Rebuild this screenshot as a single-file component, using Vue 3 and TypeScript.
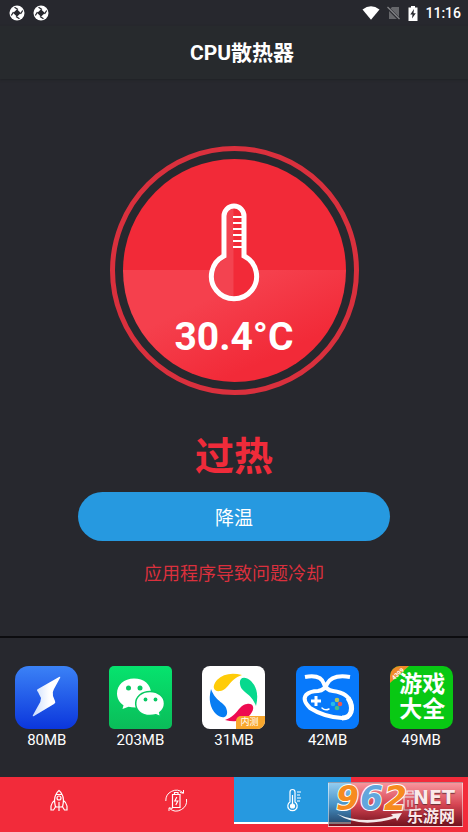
<script setup lang="ts">
import { ref } from 'vue'

interface AppItem {
  id: string
  name: string
  size: string
}

const apps: AppItem[] = [
  { id: 'bolt', name: '加速', size: '80MB' },
  { id: 'wechat', name: '微信', size: '203MB' },
  { id: 'swirl', name: '应用宝', size: '31MB' },
  { id: 'game', name: '游戏', size: '42MB' },
  { id: 'box', name: '游戏大全', size: '49MB' },
]

const tabs = [
  { id: 'boost', label: '加速' },
  { id: 'battery', label: '省电' },
  { id: 'cool', label: '降温' },
  { id: 'junk', label: '清理' },
]
const active = ref('cool')
const ticks = [217, 223, 229, 235, 241, 247]
const petals = ['#ffcc08', '#07d98e', '#ee0b50', '#087df2']
</script>

<template>
  <div class="screen">
    <div class="status">
      <div class="status-group left">
        <svg v-for="n in 2" :key="n" class="spinner" viewBox="0 0 16 16">
          <circle cx="8" cy="8" r="7.500" fill="#fff" />
          <path d="M8 4.200 11.800 8 8 11.800 4.200 8Z" fill="#27282e" />
          <path d="M9 4.500 5.500 2.300M11.500 9l2.200-3.500M7 11.500l3.500 2.200M4.500 7 2.300 10.500" stroke="#27282e" stroke-width="1.300" />
        </svg>
      </div>
      <div class="status-group">
        <svg class="wifi" viewBox="0 0 18 14"><path d="M0.500 3.500Q9-3 17.500 3.500L9 13.700Z" fill="#fff" /></svg>
        <svg class="sim" viewBox="0 0 14 14">
          <path d="M5 1h7v12H2V4Z" fill="#66676b" />
          <path d="M0 1l13 13" stroke="#27282e" stroke-width="3" />
          <path d="M0.500 1l12 12" stroke="#85868a" stroke-width="1.200" />
        </svg>
        <svg class="batt" viewBox="0 0 10 15">
          <path d="M3 0h4v1.500h2.500V15H.5V1.500H3Z" fill="#fff" />
          <path d="M6 3 2.300 8.500h2.200L4 12.500l3.800-5.300H5.500Z" fill="#27282e" />
        </svg>
        <span class="time">11:16</span>
      </div>
    </div>

    <header class="titlebar"><h1>CPU散热器</h1></header>

    <main class="main">
      <div class="dial">
        <div class="disc">
          <svg class="thermo" viewBox="208 203 52 100">
            <path d="M224 256V216a10 10 0 0 1 20 0V256a22.600 22.600 0 1 1-20 0Z" fill="#f22a38" stroke="#fff" stroke-width="5" />
            <path d="M226.500 216q1-7 7-8v88.500q-18-1-20-20 1-13 13-18.500Z" fill="#fff" opacity=".12" />
            <path v-for="y in ticks" :key="y" :d="`M233 ${y}h10`" stroke="#fff" stroke-width="2" />
          </svg>
          <div class="temp">30.4°C</div>
        </div>
      </div>
      <h2 class="state">过热</h2>
      <button class="cool" type="button">降温</button>
      <p class="hint">应用程序导致问题冷却</p>
    </main>

    <section class="apps">
      <div v-for="app in apps" :key="app.id" class="app">
        <div class="icon" :class="app.id">
          <svg v-if="app.id === 'bolt'" viewBox="0 0 63 63">
            <defs>
              <linearGradient id="boltfill" x1="0" y1="0" x2="1" y2="0">
                <stop offset="0" stop-color="#c9dcfc" /><stop offset=".6" stop-color="#fff" />
              </linearGradient>
            </defs>
            <path d="M44 11 23 23q-2 1 0 3l3 6q0 4-3 8l-5 9q-1 2 1 1l20-12q2-1 1-3l-2-5q-1-4 1-7l6-11q1-2-1-1Z" fill="url(#boltfill)" />
          </svg>
          <svg v-else-if="app.id === 'wechat'" viewBox="0 0 63 63">
            <path d="M25 12.500c-10 0-17 6.500-17 15 0 5 2.500 9 6.500 11.700L13.500 43l6-2.300q3 .8 7 .8c9 0 15.500-6 15.500-14.500S35 12.500 25 12.500Z" fill="#fff" />
            <path d="M41 25.500c-8.500 0-14.300 5.400-14.300 12S32 49.500 41 49.500q3 0 6-.8l4.500 2-.8-4.200c3-2.200 4.800-5.300 4.800-9 0-6.600-6-12-14.500-12Z" fill="#fff" stroke="#08ca62" stroke-width="1.500" />
            <g fill="#08c863">
              <circle cx="19.500" cy="22" r="2.500" /><circle cx="31" cy="22" r="2.500" />
              <circle cx="36.500" cy="33.500" r="1.900" /><circle cx="46.500" cy="33.500" r="1.900" />
            </g>
          </svg>
          <svg v-else-if="app.id === 'swirl'" viewBox="0 0 63 63">
            <path
              v-for="(color, i) in petals"
              :key="color"
              d="M40 9Q24 5 15 14C9 21 12 26 18 25 27 24 26 14 40 9Z"
              :fill="color"
              :transform="`rotate(${i * 90} 31.500 31.500)`"
            />
          </svg>
          <svg v-else-if="app.id === 'game'" viewBox="0 0 63 63">
            <g fill="none" stroke="#fff">
              <path d="M9 11Q25 8 28 18 30 24 37 25 53 27 55 38 57 52 46 52 28 51 14 42 6 34 10 29 14 25 22 25 29 24 31 18 36 8 54 11" stroke-width="4" />
              <path d="M52 32q5 7 3 14-2 6-9 6" stroke-width="5" />
              <path d="M20 30v10M15 35h10" stroke-width="3" />
              <path d="M26 42q3 3 7 1" stroke-width="1.500" stroke-linecap="round" />
            </g>
            <circle cx="41" cy="34" r="2.300" fill="#b2c65b" /><circle cx="37" cy="38" r="2.300" fill="#27b9e8" />
            <circle cx="44" cy="38" r="2.300" fill="#ef594f" /><circle cx="41" cy="42" r="2.300" fill="#41bd8d" />
          </svg>
          <template v-else>
            <svg class="corner" viewBox="0 0 63 63">
              <path d="M0 0h19L0 17Z" fill="#f08a28" />
              <text x="8" y="10" transform="rotate(-43 8 8)" text-anchor="middle" font-size="6" font-weight="700" fill="#fff">4399</text>
            </svg>
            <span class="boxtext">游戏<br />大全</span>
          </template>
          <span v-if="app.id === 'swirl'" class="beta">内测</span>
        </div>
        <span class="size">{{ app.size }}</span>
      </div>
    </section>

    <nav class="tabs">
      <button
        v-for="tab in tabs"
        :key="tab.id"
        type="button"
        class="tab"
        :class="{ active: active === tab.id }"
        :aria-label="tab.label"
        @click="active = tab.id"
      >
        <svg viewBox="0 0 24 24" fill="none" stroke="#fff" stroke-width="1.200">
          <template v-if="tab.id === 'boost'">
            <path d="M8.500 19q-2-8 .2-12Q10 4 12 2.500 14 4 15.300 7q2.200 4 .2 12ZM9 6.500h6M12 14v9M8 12q-3.500 2.500-4 6v4h2.500L9 18M16 12q3.500 2.500 4 6v4h-2.500L15 18" />
            <circle cx="12" cy="10" r="2" />
          </template>
          <template v-else-if="tab.id === 'battery'">
            <path d="M8.500 6.500h7.500v13H8.500ZM10.500 6.500v-2H14v2M12.800 9l-2 4h3l-2 4" />
            <path d="M1.800 13A10.400 10.400 0 0 1 19 4.800M16 4.500l3.500 .8V2M22.500 11A10.400 10.400 0 0 1 5.500 20.500M8.500 20.500 5 19.800V23" stroke-width="1" />
          </template>
          <template v-else-if="tab.id === 'cool'">
            <path d="M9 14V4a2.500 2.500 0 0 1 5 0v10a4.700 4.700 0 1 1-5 0Z" />
            <path d="M11.500 7v9M16 4h4M16 7h3M16 10h4M16 13h3" />
            <circle cx="11.500" cy="18" r="2" fill="#fff" />
          </template>
          <template v-else>
            <path d="M5 6h14M9 6V3h6v3M6 9h12v13H6ZM10 12v7M14 12v7" />
          </template>
        </svg>
      </button>
      <div class="mark">
        <svg class="logo" viewBox="0 -12 90 55">
          <path d="M8 31q26 11 56 2l-2-2 11-1-5 8-1-3Q30 46 8 31Z" fill="#fff" opacity=".9" />
          <g class="digits">
            <text x="7" y="27" fill="#f68b1f">9</text>
            <text x="31" y="27" fill="#62a6dc">6</text>
            <text x="55" y="27" fill="#f68b1f">2</text>
          </g>
        </svg>
        <div class="net">NET</div>
        <div class="site">乐游网</div>
      </div>
    </nav>
  </div>
</template>

<style>
body {
  background: #27282e;
}
</style>

<style scoped>
.screen {
  min-height: 100vh;
  display: flex;
  flex-direction: column;
  background: #27282e;
  color: #fff;
  font-family: Roboto, "Noto Sans CJK SC", sans-serif;
}
.status {
  height: 26px;
  padding: 0 7px 0 9px;
  display: flex;
  align-items: center;
  justify-content: space-between;
}
.status-group {
  display: flex;
  align-items: center;
  gap: 7px;
}
.status-group.left {
  gap: 8px;
}
.spinner {
  width: 16px;
  height: 16px;
}
.wifi {
  width: 18px;
  height: 14px;
}
.sim {
  width: 14px;
  height: 14px;
}
.batt {
  width: 10px;
  height: 15px;
}
.time {
  font-size: 14px;
  font-weight: 500;
}
.titlebar {
  height: 53px;
  display: flex;
  align-items: center;
  justify-content: center;
  padding-left: 16px;
  background: #272a2d;
  box-shadow: 0 1px 2px #202226;
}
h1 {
  margin: 0;
  font-size: 21px;
  line-height: 28px;
  font-weight: 700;
}
.main {
  flex: 1;
  display: flex;
  flex-direction: column;
  align-items: center;
  padding-top: 67px;
}
.dial {
  box-sizing: border-box;
  width: 249px;
  height: 249px;
  padding: 8px;
  border: 5px solid #da303d;
  border-radius: 50%;
}
.disc {
  height: 100%;
  border-radius: 50%;
  display: flex;
  flex-direction: column;
  align-items: center;
  background:
    linear-gradient(#f22a38 50%, transparent 50%),
    linear-gradient(155deg, #f5404d 55%, #f22a38 82%);
}
.thermo {
  width: 52px;
  height: 100px;
  margin-top: 44px;
}
.temp {
  margin-top: 10px;
  font-size: 39px;
  line-height: 48px;
  font-weight: 700;
}
.state {
  margin: 34px 0 0;
  font-size: 39px;
  line-height: 56px;
  font-weight: 700;
  color: #ef2b3a;
}
.cool {
  width: 66.6%;
  height: 49px;
  margin-top: 7px;
  border: 0;
  border-radius: 25px;
  background: #2699e0;
  color: #fff;
  font: 19px Roboto, "Noto Sans CJK SC", sans-serif;
}
.hint {
  margin: 20px 0 0;
  font-size: 18px;
  line-height: 26px;
  color: #da303d;
}
.apps {
  display: grid;
  grid-template-columns: repeat(5, 1fr);
  padding: 28px 0 26px;
  border-top: 2px solid #0c0c0f;
}
.app {
  display: flex;
  flex-direction: column;
  align-items: center;
}
.icon {
  position: relative;
  width: 63px;
  height: 63px;
  border-radius: 8px;
  overflow: hidden;
}
.icon svg {
  display: block;
  width: 100%;
  height: 100%;
}
.bolt {
  border-radius: 14px;
  background: linear-gradient(#3b82f6, #0b36dc);
}
.wechat {
  border-radius: 5px;
  background: linear-gradient(#06e36e, #0abd59);
}
.swirl {
  background: #fff;
}
.game {
  background: #0779fb;
}
.box {
  border-radius: 10px;
  background: #08c813;
}
.icon .corner {
  position: absolute;
  inset: 0;
}
.boxtext {
  display: block;
  padding: 6px 0 0 2px;
  font-size: 23px;
  line-height: 25px;
  font-weight: 700;
  text-align: center;
}
.beta {
  position: absolute;
  right: 0;
  bottom: 0;
  padding: 0 7px 0 4px;
  border-radius: 5px 0 0 0;
  background: #f8a72d;
  font-size: 9px;
  line-height: 13px;
}
.size {
  font-size: 15px;
  line-height: 22px;
}
.tabs {
  position: relative;
  display: grid;
  grid-template-columns: repeat(4, 1fr);
  height: 47px;
  padding-bottom: 8px;
  background: #f22b3a;
}
.tab {
  padding: 0;
  border: 0;
  border-bottom: 2px solid transparent;
  background: none;
  display: flex;
  align-items: center;
  justify-content: center;
}
.tab.active {
  background: #2699e0;
  border-bottom-color: #fff;
}
.tab svg {
  width: 24px;
  height: 24px;
}
.mark {
  position: absolute;
  right: 5px;
  bottom: 5px;
  box-sizing: border-box;
  width: 135px;
  height: 45px;
  border: 1px solid rgba(255, 255, 255, 0.5);
  background: linear-gradient(rgba(255, 255, 255, 0.5), rgba(150, 130, 140, 0.3) 50%, rgba(30, 0, 10, 0.6));
  pointer-events: none;
}
.logo {
  position: absolute;
  left: 0;
  bottom: 0;
  width: 90px;
  height: 55px;
}
.digits {
  font: italic bold 33px "DejaVu Sans", sans-serif;
  stroke: #fff;
  stroke-width: 2px;
  paint-order: stroke;
}
.net {
  position: absolute;
  left: 84px;
  top: 4px;
  font: bold 19px/20px "DejaVu Sans", sans-serif;
  color: #fbe9ea;
  text-shadow: 0 1px 1px #6b3038;
}
.site {
  position: absolute;
  left: 78px;
  top: 24px;
  font-size: 16px;
  line-height: 20px;
  font-weight: 700;
  color: #fbe9ea;
  text-shadow: 0 1px 1px #5b1018;
}
</style>
